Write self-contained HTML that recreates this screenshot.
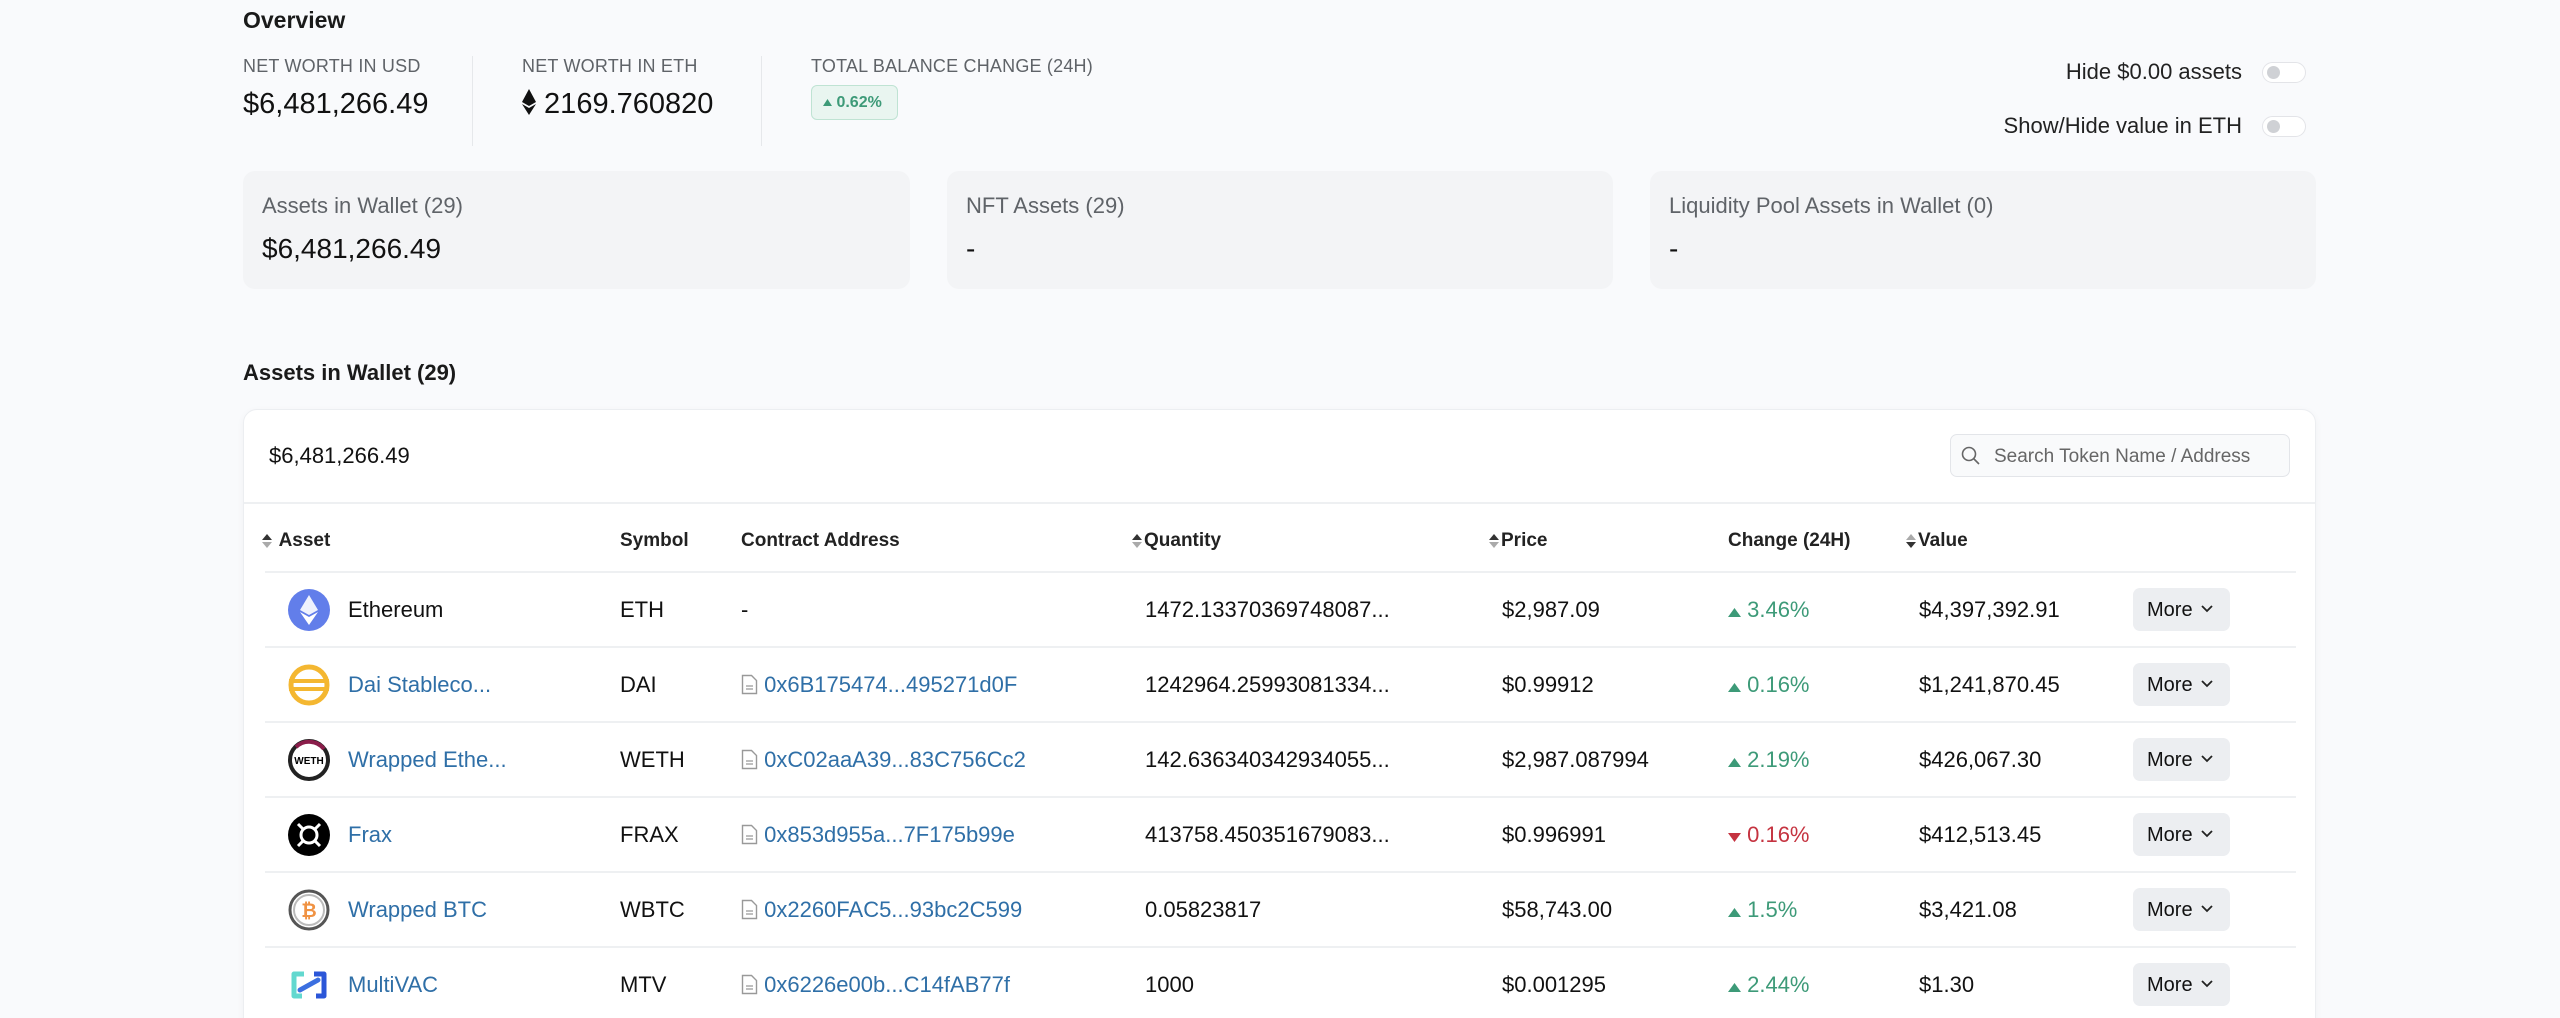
<!DOCTYPE html>
<html style="width:2560px;height:1018px;overflow:hidden"><head><meta charset="utf-8"><style>
*{box-sizing:border-box;margin:0;padding:0}
body{width:2560px;height:1018px;background:#f9fafc;font-family:"Liberation Sans",Arial,sans-serif;color:#111;position:relative;overflow:hidden}
.a{position:absolute;white-space:nowrap}
.lbl{font-size:18px;color:#5f6368;letter-spacing:.2px}
.val{font-size:29px;color:#111}
.card{position:absolute;top:171px;height:118px;background:#f3f4f6;border-radius:12px}
.card .t{position:absolute;left:19px;top:22px;font-size:22px;color:#5f6368}
.card .v{position:absolute;left:19px;top:62px;font-size:28px;color:#111}
.tog{position:absolute;width:44px;height:21px;border:1px solid #e3e4e8;border-radius:11px;background:#fff}
.tog:after{content:"";position:absolute;left:4px;top:3px;width:13px;height:13px;border-radius:50%;background:#cfd1d5}
.th{position:absolute;top:530px;font-size:19px;font-weight:bold;color:#222}
.row{position:absolute;left:265px;width:2031px;height:75px;border-top:2px solid #eef0f2}
.c{position:absolute;font-size:22px;top:50%;transform:translateY(-50%);white-space:nowrap}
.lnk{color:#2f6fa7}
.g{color:#3d9a78}.r{color:#c53340}
.more{position:absolute;left:1868px;top:15px;width:97px;height:43px;background:#eceef1;border-radius:7px;font-size:20px;padding:11px 0 0 14px}
.more svg{position:absolute;right:17px;top:17px}
.sort{display:inline-block;vertical-align:middle;margin-right:2px}
</style></head><body>
<div class="a" style="left:243px;top:7px;font-size:23px;font-weight:bold;color:#1a1a1a">Overview</div>
<div class="a lbl" style="left:243px;top:56px">NET WORTH IN USD</div>
<div class="a val" style="left:243px;top:88px">$6,481,266.49</div>
<div class="a" style="left:472px;top:56px;width:1px;height:90px;background:#e6e8eb"></div>
<div class="a lbl" style="left:522px;top:56px">NET WORTH IN ETH</div>
<div class="a val" style="left:522px;top:88px"><svg width="14" height="26" viewBox="0 0 14 26" style="vertical-align:-2px"><path d="M7 0L0 13l7 4 7-4z M0 15l7 11 7-11-7 4z" fill="#111"/></svg> 2169.760820</div>
<div class="a" style="left:761px;top:56px;width:1px;height:90px;background:#e6e8eb"></div>
<div class="a lbl" style="left:811px;top:56px">TOTAL BALANCE CHANGE (24H)</div>
<div class="a" style="left:811px;top:85px;width:87px;height:35px;border:1px solid #bfe3d3;background:#e9f5f0;border-radius:6px;color:#3d9a78;font-size:16px;font-weight:bold;padding:8px 0 0 11px"><svg width="9" height="7" style="vertical-align:1px"><path d="M4.5 0L9 7H0z" fill="#3d9a78"/></svg> 0.62%</div>
<div class="a" style="right:318px;top:59px;font-size:22px;color:#222">Hide $0.00 assets</div>
<div class="tog" style="left:2262px;top:62px"></div>
<div class="a" style="right:318px;top:113px;font-size:22px;color:#222">Show/Hide value in ETH</div>
<div class="tog" style="left:2262px;top:116px"></div>
<div class="card" style="left:243px;width:667px"><div class="t">Assets in Wallet (29)</div><div class="v">$6,481,266.49</div></div>
<div class="card" style="left:947px;width:666px"><div class="t">NFT Assets (29)</div><div class="v">-</div></div>
<div class="card" style="left:1650px;width:666px"><div class="t">Liquidity Pool Assets in Wallet (0)</div><div class="v">-</div></div>
<div class="a" style="left:243px;top:360px;font-size:22px;font-weight:bold;color:#1a1a1a">Assets in Wallet (29)</div>
<div class="a" style="left:243px;top:409px;width:2073px;height:640px;background:#fff;border:1px solid #eceef1;border-radius:14px;box-shadow:0 2px 8px rgba(0,0,0,.04)"></div>
<div class="a" style="left:269px;top:443px;font-size:22px">$6,481,266.49</div>
<div class="a" style="left:1950px;top:434px;width:340px;height:43px;border:1px solid #e3e5e9;border-radius:7px;background:#f9fafb"><svg width="20" height="20" viewBox="0 0 20 20" style="position:absolute;left:10px;top:11px"><circle cx="8" cy="8" r="6.5" fill="none" stroke="#666" stroke-width="1.6"/><path d="M13 13l5 5" stroke="#666" stroke-width="1.6"/></svg><span style="position:absolute;left:43px;top:11px;font-size:19px;color:#666">Search Token Name / Address</span></div>
<div class="a" style="left:244px;top:502px;width:2071px;height:2px;background:#eef0f2"></div>
<svg width="0" height="0" style="position:absolute"><defs><g id="so"><path d="M5 0L10 6H0z" fill="#333"/><path d="M5 14L10 8H0z" fill="#aaa"/></g><g id="sd"><path d="M5 0L10 6H0z" fill="#aaa"/><path d="M5 14L10 8H0z" fill="#333"/></g></defs></svg>
<div class="th" style="left:262px"><svg class="sort" width="10" height="14"><use href="#so"/></svg> Asset</div>
<div class="th" style="left:620px">Symbol</div>
<div class="th" style="left:741px">Contract Address</div>
<div class="th" style="left:1132px"><svg class="sort" width="10" height="14"><use href="#so"/></svg>Quantity</div>
<div class="th" style="left:1489px"><svg class="sort" width="10" height="14"><use href="#so"/></svg>Price</div>
<div class="th" style="left:1728px">Change (24H)</div>
<div class="th" style="left:1906px"><svg class="sort" width="10" height="14"><use href="#sd"/></svg>Value</div>

<div class="row" style="top:571px">
<svg class="c" style="left:23px" width="42" height="42" viewBox="0 0 42 42"><circle cx="21" cy="21" r="21" fill="#627eea"/><path d="M21 6l-9 15 9 5 9-5z" fill="#fff" opacity=".9"/><path d="M21 28l-9-5 9 13 9-13z" fill="#fff"/></svg>
<div class="c" style="left:83px">Ethereum</div><div class="c" style="left:355px">ETH</div><div class="c" style="left:476px">-</div>
<div class="c" style="left:880px">1472.13370369748087...</div><div class="c" style="left:1237px">$2,987.09</div>
<div class="c g" style="left:1463px"><svg width="13" height="9"><path d="M6.5 0L13 9H0z" fill="#3d9a78"/></svg> 3.46%</div>
<div class="c" style="left:1654px">$4,397,392.91</div><div class="more">More<svg width="12" height="8"><path d="M1 1l5 5 5-5" fill="none" stroke="#222" stroke-width="1.8"/></svg></div></div>

<div class="row" style="top:646px">
<svg class="c" style="left:23px" width="42" height="42" viewBox="0 0 42 42"><circle cx="21" cy="21" r="18" fill="none" stroke="#f4b731" stroke-width="5"/><rect x="1" y="15" width="40" height="4" fill="#f4b731"/><rect x="1" y="23" width="40" height="4" fill="#f4b731"/></svg>
<div class="c lnk" style="left:83px">Dai Stableco...</div><div class="c" style="left:355px">DAI</div>
<div class="c lnk" style="left:476px"><svg width="17" height="21" style="vertical-align:-3px"><path d="M1.5 1.5h9l5 5v13h-14z" fill="none" stroke="#999" stroke-width="1.4"/><path d="M5 12h7M5 15h7" stroke="#999" stroke-width="1.2"/></svg> 0x6B175474...495271d0F</div>
<div class="c" style="left:880px">1242964.25993081334...</div><div class="c" style="left:1237px">$0.99912</div>
<div class="c g" style="left:1463px"><svg width="13" height="9"><path d="M6.5 0L13 9H0z" fill="#3d9a78"/></svg> 0.16%</div>
<div class="c" style="left:1654px">$1,241,870.45</div><div class="more">More<svg width="12" height="8"><path d="M1 1l5 5 5-5" fill="none" stroke="#222" stroke-width="1.8"/></svg></div></div>

<div class="row" style="top:721px">
<svg class="c" style="left:23px" width="42" height="42" viewBox="0 0 42 42"><circle cx="21" cy="21" r="19" fill="#fff" stroke="#222" stroke-width="4"/><path d="M8 8A19 19 0 0 1 36 10" stroke="#8a1d4a" stroke-width="4" fill="none"/><text x="21" y="25" font-size="10" font-weight="bold" text-anchor="middle" font-family="Liberation Sans">WETH</text></svg>
<div class="c lnk" style="left:83px">Wrapped Ethe...</div><div class="c" style="left:355px">WETH</div>
<div class="c lnk" style="left:476px"><svg width="17" height="21" style="vertical-align:-3px"><path d="M1.5 1.5h9l5 5v13h-14z" fill="none" stroke="#999" stroke-width="1.4"/><path d="M5 12h7M5 15h7" stroke="#999" stroke-width="1.2"/></svg> 0xC02aaA39...83C756Cc2</div>
<div class="c" style="left:880px">142.636340342934055...</div><div class="c" style="left:1237px">$2,987.087994</div>
<div class="c g" style="left:1463px"><svg width="13" height="9"><path d="M6.5 0L13 9H0z" fill="#3d9a78"/></svg> 2.19%</div>
<div class="c" style="left:1654px">$426,067.30</div><div class="more">More<svg width="12" height="8"><path d="M1 1l5 5 5-5" fill="none" stroke="#222" stroke-width="1.8"/></svg></div></div>

<div class="row" style="top:796px">
<svg class="c" style="left:23px" width="42" height="42" viewBox="0 0 42 42"><circle cx="21" cy="21" r="21" fill="#000"/><circle cx="21" cy="21" r="8" fill="none" stroke="#fff" stroke-width="3"/><path d="M10 10l6 6M32 10l-6 6M10 32l6-6M32 32l-6-6" stroke="#fff" stroke-width="3"/></svg>
<div class="c lnk" style="left:83px">Frax</div><div class="c" style="left:355px">FRAX</div>
<div class="c lnk" style="left:476px"><svg width="17" height="21" style="vertical-align:-3px"><path d="M1.5 1.5h9l5 5v13h-14z" fill="none" stroke="#999" stroke-width="1.4"/><path d="M5 12h7M5 15h7" stroke="#999" stroke-width="1.2"/></svg> 0x853d955a...7F175b99e</div>
<div class="c" style="left:880px">413758.450351679083...</div><div class="c" style="left:1237px">$0.996991</div>
<div class="c r" style="left:1463px"><svg width="13" height="9"><path d="M6.5 9L13 0H0z" fill="#c53340"/></svg> 0.16%</div>
<div class="c" style="left:1654px">$412,513.45</div><div class="more">More<svg width="12" height="8"><path d="M1 1l5 5 5-5" fill="none" stroke="#222" stroke-width="1.8"/></svg></div></div>

<div class="row" style="top:871px">
<svg class="c" style="left:23px" width="42" height="42" viewBox="0 0 42 42"><circle cx="21" cy="21" r="19" fill="#fff" stroke="#555" stroke-width="3"/><circle cx="21" cy="21" r="15" fill="none" stroke="#bbb" stroke-width="2"/><text x="21" y="28" font-size="19" font-weight="bold" fill="#f09242" text-anchor="middle" font-family="Liberation Sans">₿</text></svg>
<div class="c lnk" style="left:83px">Wrapped BTC</div><div class="c" style="left:355px">WBTC</div>
<div class="c lnk" style="left:476px"><svg width="17" height="21" style="vertical-align:-3px"><path d="M1.5 1.5h9l5 5v13h-14z" fill="none" stroke="#999" stroke-width="1.4"/><path d="M5 12h7M5 15h7" stroke="#999" stroke-width="1.2"/></svg> 0x2260FAC5...93bc2C599</div>
<div class="c" style="left:880px">0.05823817</div><div class="c" style="left:1237px">$58,743.00</div>
<div class="c g" style="left:1463px"><svg width="13" height="9"><path d="M6.5 0L13 9H0z" fill="#3d9a78"/></svg> 1.5%</div>
<div class="c" style="left:1654px">$3,421.08</div><div class="more">More<svg width="12" height="8"><path d="M1 1l5 5 5-5" fill="none" stroke="#222" stroke-width="1.8"/></svg></div></div>

<div class="row" style="top:946px">
<svg class="c" style="left:23px" width="42" height="42" viewBox="0 0 42 42"><path d="M16 10H6V32H14" fill="none" stroke="#62d8cf" stroke-width="5" stroke-linejoin="round"/><path d="M26 10H36V32H28" fill="none" stroke="#2b56d8" stroke-width="5" stroke-linejoin="round"/><path d="M12 26L30 16" stroke="#3b6fe0" stroke-width="5" stroke-linecap="round"/></svg>
<div class="c lnk" style="left:83px">MultiVAC</div><div class="c" style="left:355px">MTV</div>
<div class="c lnk" style="left:476px"><svg width="17" height="21" style="vertical-align:-3px"><path d="M1.5 1.5h9l5 5v13h-14z" fill="none" stroke="#999" stroke-width="1.4"/><path d="M5 12h7M5 15h7" stroke="#999" stroke-width="1.2"/></svg> 0x6226e00b...C14fAB77f</div>
<div class="c" style="left:880px">1000</div><div class="c" style="left:1237px">$0.001295</div>
<div class="c g" style="left:1463px"><svg width="13" height="9"><path d="M6.5 0L13 9H0z" fill="#3d9a78"/></svg> 2.44%</div>
<div class="c" style="left:1654px">$1.30</div><div class="more">More<svg width="12" height="8"><path d="M1 1l5 5 5-5" fill="none" stroke="#222" stroke-width="1.8"/></svg></div></div>
</body></html>
